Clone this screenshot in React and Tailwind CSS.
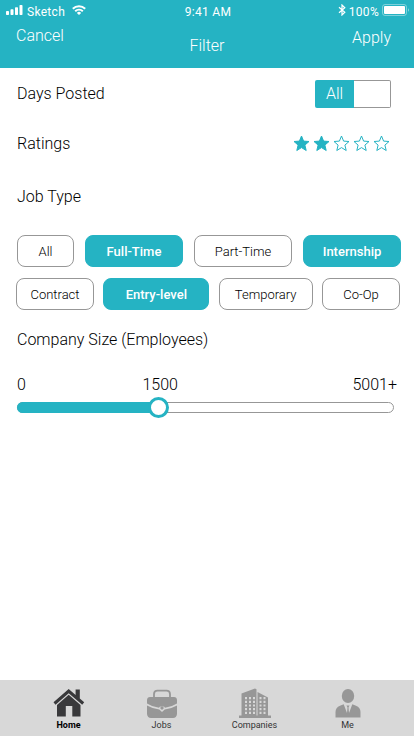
import { useState } from 'react';

const STAR = 'M8.5 1l2.1 5.1 5.4.4-4.1 3.6 1.3 5.4-4.700-2.900-4.700 2.900 1.300-5.400L1 6.500l5.400-.4z';

const JOB_TYPE_ROWS = [
  [
    { name: 'All', width: 'w-[57px]' },
    { name: 'Full-Time', width: 'w-[98px]' },
    { name: 'Part-Time', width: 'w-[98px]' },
    { name: 'Internship', width: 'w-[98px]' },
  ],
  [
    { name: 'Contract', width: 'w-[78px]' },
    { name: 'Entry-level', width: 'w-[106px]' },
    { name: 'Temporary', width: 'w-[94px]' },
    { name: 'Co-Op', width: 'w-[78px]' },
  ],
];

function StatusBar() {
  return (
    <div className="grid h-5 grid-cols-3 items-center pt-1 pr-1 pl-[6px] font-['Roboto',sans-serif] text-xs leading-4 font-normal tracking-wide">
      <div className="flex items-center gap-1">
        <svg className="-mt-1" width="17" height="10" viewBox="0 0 17 10" fill="currentColor" aria-hidden="true">
          <rect x="0" y="6" width="3" height="4" rx=".7" />
          <rect x="4.5" y="4.3" width="3" height="5.7" rx=".7" />
          <rect x="9" y="2.3" width="3" height="7.7" rx=".7" />
          <rect x="13.5" y="0" width="3" height="10" rx=".7" />
        </svg>
        <span>Sketch</span>
        <svg className="-mt-1 ml-[3px]" width="14" height="10" viewBox="0 0 14 10" fill="none" stroke="currentColor" strokeWidth="2" aria-hidden="true">
          <path d="M.8 3.7a9 9 0 0 1 12.4 0M3.2 6.2a5.5 5.5 0 0 1 7.6 0" />
          <path d="M7 10L4.9 7.9a3 3 0 0 1 4.2 0z" fill="currentColor" stroke="none" />
        </svg>
      </div>
      <span className="text-center">9:41 AM</span>
      <div className="flex items-center justify-end gap-[3px]">
        <svg className="-mt-1" width="8" height="12" viewBox="0 0 8 12" fill="none" stroke="currentColor" strokeWidth="1.2" aria-hidden="true">
          <path d="M1 3.3l5.8 5L4 11V1l2.8 2.7L1 8.7" />
        </svg>
        <span>100%</span>
        <svg className="-mt-1" width="28" height="12" viewBox="0 0 28 12" aria-hidden="true">
          <rect x=".5" y=".5" width="24" height="11" rx="2.500" fill="none" stroke="currentColor" opacity=".4" />
          <rect x="2" y="2" width="21" height="8" rx="1" fill="currentColor" />
          <path d="M26 4.300a2 2 0 0 1 0 3.400z" fill="currentColor" opacity=".5" />
        </svg>
      </div>
    </div>
  );
}

function Rating() {
  const [rating, setRating] = useState(2);
  return (
    <div role="radiogroup" aria-labelledby="ratings" className="flex gap-[3px] pb-[2px]">
      {[1, 2, 3, 4, 5].map((n) => (
        <label key={n} className="relative cursor-pointer">
          <input
            type="radio"
            name="rating"
            aria-label={`${n} stars`}
            checked={rating === n}
            onChange={() => setRating(n)}
            className="absolute inset-0 appearance-none"
          />
          <svg width="17" height="17" viewBox="0 0 17 17" stroke="#25b3c3" fill={n <= rating ? '#25b3c3' : 'none'} aria-hidden="true">
            <path d={STAR} />
          </svg>
        </label>
      ))}
    </div>
  );
}

function JobTypes() {
  const [selected, setSelected] = useState(['Full-Time', 'Internship', 'Entry-level']);
  const toggle = (name) =>
    setSelected((s) => (s.includes(name) ? s.filter((n) => n !== name) : [...s, name]));
  return (
    <div role="group" aria-labelledby="job-type" className="mt-[26px] -ml-px flex flex-col gap-[11px]">
      {JOB_TYPE_ROWS.map((row, i) => (
        <div key={row[0].name} className={`flex justify-between ${i === 0 ? 'pl-px' : 'pr-px'}`}>
          {row.map(({ name, width }) => {
            const on = selected.includes(name);
            return (
              <button
                key={name}
                type="button"
                aria-pressed={on}
                onClick={() => toggle(name)}
                className={`h-8 rounded-lg border pt-px text-[13px] ${width} ${
                  on
                    ? 'border-[#25b3c3] bg-[#25b3c3] font-medium text-white'
                    : 'border-[#979797] bg-white text-black'
                }`}
              >
                {name}
              </button>
            );
          })}
        </div>
      ))}
    </div>
  );
}

function CompanySize() {
  const [position, setPosition] = useState(22);
  return (
    <div className="mr-[7px]">
      <div className="mt-[21px] -mr-[3px] flex">
        <span className="w-[33%]">0</span>
        <output htmlFor="size">1500</output>
        <span className="ml-auto">5001+</span>
      </div>
      <div className="grid items-center">
        <div className="col-start-1 row-start-1 h-[11px] overflow-hidden rounded-full border border-[#979797] bg-white" />
        <div
          className="col-start-1 row-start-1 h-[11px] rounded-l-full bg-[#25b3c3]"
          style={{ width: `${2.7 + (position / 60) * 94.6}%` }}
        />
        <input
          id="size"
          type="range"
          min="0"
          max="60"
          value={position}
          onChange={(e) => setPosition(Number(e.target.value))}
          aria-labelledby="company-size"
          className="z-10 col-start-1 row-start-1 h-[21px] w-full cursor-pointer appearance-none bg-transparent [&::-webkit-slider-thumb]:size-[21px] [&::-webkit-slider-thumb]:appearance-none [&::-webkit-slider-thumb]:rounded-full [&::-webkit-slider-thumb]:border-[3px] [&::-webkit-slider-thumb]:border-solid [&::-webkit-slider-thumb]:border-[#25b3c3] [&::-webkit-slider-thumb]:bg-white"
        />
      </div>
    </div>
  );
}

function HomeIcon() {
  return (
    <svg width="32" height="30" viewBox="0 0 32 30" fill="#39393b" aria-hidden="true">
      <path d="M.5 14.200L15.700 1l6.900 6V1.500h4.200v9l4.400 3.700-2 2.500L15.700 5.200 2.500 16.700z" />
      <path d="M15.700 6.700L27.500 17v11.500h-8.200V18h-6.500v10.500H4V17z" />
    </svg>
  );
}

function JobsIcon() {
  return (
    <svg width="32" height="30" viewBox="0 0 32 30" fill="#979797" aria-hidden="true">
      <path d="M8 9V6a3.500 3.500 0 0 1 3.500-3.300h9A3.500 3.500 0 0 1 24 6v3" fill="none" stroke="#979797" strokeWidth="1.800" />
      <path d="M4 9h24q2.800 0 3 3v3.500q-5.500 3.600-12 4.200l-1-1.200h-4l-1 1.200Q6.500 19.100 1 15.500V12q.2-3 3-3z" />
      <path d="M1 17.500q5.700 3.300 12.300 4L16 24l2.700-2.500q6.600-.7 12.300-4V26q-.5 4-4 4H5q-3.500 0-4-4z" />
      <path d="M14.500 18.500h3v2L16 22l-1.500-1.500z" />
    </svg>
  );
}

function CompaniesIcon() {
  return (
    <svg width="32" height="30" viewBox="0 0 32 30" fill="#979797" aria-hidden="true">
      <path d="M0 27.500h2.500V5.500L16 .5l1.500.8v26.200h1V4l10.500 5.500v18h3V30H0z" />
      <path
        d="M7 9v17M11 9v17M15 9v17M21.500 9v17M25.500 9v17"
        stroke="#d8d8d8"
        strokeWidth="2"
        strokeDasharray="2.200 1.500"
        fill="none"
      />
    </svg>
  );
}

function MeIcon() {
  return (
    <svg width="32" height="30" viewBox="0 0 32 30" fill="#979797" aria-hidden="true">
      <ellipse cx="16" cy="8" rx="6.200" ry="7" />
      <path d="M3.500 29.500V24q0-4.500 4.500-6.200l3.700-1.600L15 25l.5-5.500-1-2h3l-1 2L17 25l3.300-8.800 3.700 1.600q4.500 1.700 4.500 6.200v5.500z" />
    </svg>
  );
}

const TABS = [
  { name: 'Home', Icon: HomeIcon },
  { name: 'Jobs', Icon: JobsIcon },
  { name: 'Companies', Icon: CompaniesIcon },
  { name: 'Me', Icon: MeIcon },
];

export default function App() {
  return (
    <div className="flex min-h-screen flex-col bg-white font-['Roboto',Arial,sans-serif] text-base leading-6 font-light text-black">
      <header className="bg-[#25b3c3] text-white">
        <StatusBar />
        <div className="grid h-12 grid-cols-3 items-start pr-[23px] pl-4">
          <button type="button" className="justify-self-start pt-1">Cancel</button>
          <h1 className="justify-self-center pt-[14px] pl-[7px]">Filter</h1>
          <button type="button" className="justify-self-end pt-[6px]">Apply</button>
        </div>
      </header>

      <main className="grow pt-3 pr-[13px] pl-[17px]">
        <div className="flex h-7 items-center justify-between pr-[10px]">
          <label htmlFor="days">Days Posted</label>
          <div className="flex h-7 w-[76px]">
            <button type="button" aria-pressed="true" className="w-[39px] shrink-0 rounded-l-xs bg-[#25b3c3] text-white">All</button>
            <input id="days" type="text" inputMode="numeric" className="w-0 grow rounded-r-xs border border-l-0 border-[#979797] px-1 outline-none" />
          </div>
        </div>
        <div className="mt-6 flex h-6 items-center justify-between pr-[11px]">
          <h2 id="ratings">Ratings</h2>
          <Rating />
        </div>
        <h2 id="job-type" className="mt-[29px]">Job Type</h2>
        <JobTypes />
        <h2 id="company-size" className="mt-[18px]">Company Size (Employees)</h2>
        <CompanySize />
      </main>

      <nav className="flex h-14 bg-[#d8d8d8] pt-2 pr-5 pl-[22px] text-[9px] leading-3">
        {TABS.map(({ name, Icon }, i) => (
          <a
            key={name}
            href={`#${name.toLowerCase()}`}
            aria-current={i === 0 ? 'page' : undefined}
            className={`flex flex-1 flex-col items-center gap-px ${i === 0 ? 'font-bold text-black' : 'font-normal text-[#333]'}`}
          >
            <Icon />
            {name}
          </a>
        ))}
      </nav>
    </div>
  );
}
